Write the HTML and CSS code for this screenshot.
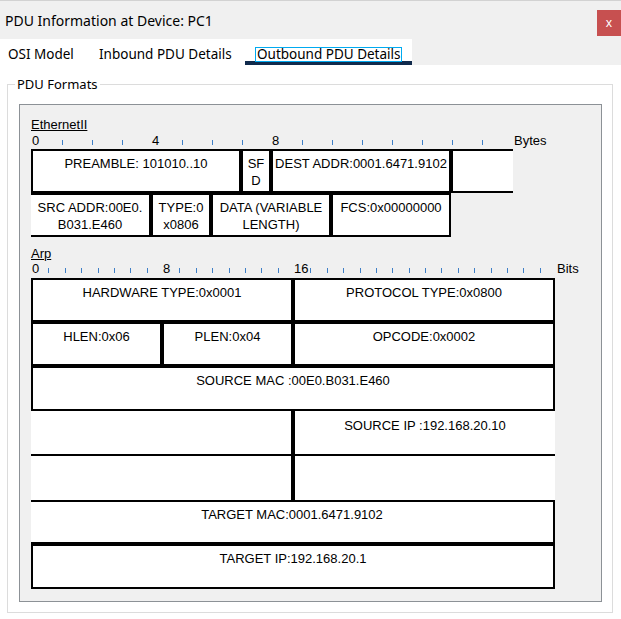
FILE: index.html
```html
<!DOCTYPE html>
<html>
<head>
<meta charset="utf-8">
<title>PDU Information at Device: PC1</title>
<link rel="stylesheet" href="styles.css">
</head>
<body>
<div class="window">
  <div class="titlebar">
    <span class="title">PDU Information at Device: PC1</span>
    <button class="close">x</button>
  </div>
  <div class="tabbar">
    <div class="tabs">
      <div class="tab tab-osi"><span class="tab-label">OSI Model</span></div>
      <div class="tab tab-in"><span class="tab-label">Inbound PDU Details</span></div>
      <div class="tab tab-out active"><span class="tab-label focus-ring">Outbound PDU Details</span></div>
    </div>
  </div>
  <div class="content">
    <fieldset class="group">
      <legend class="group-title">PDU Formats</legend>
      <div class="panel">
        <section class="pdu pdu-eth">
          <div class="pdu-name">EthernetII</div>
          <div class="ruler ruler-bytes">
            <span class="slot num">0</span>
            <span class="slot"><span class="tick"></span></span>
            <span class="slot"><span class="tick"></span></span>
            <span class="slot"><span class="tick"></span></span>
            <span class="slot num">4</span>
            <span class="slot"><span class="tick"></span></span>
            <span class="slot"><span class="tick"></span></span>
            <span class="slot"><span class="tick"></span></span>
            <span class="slot num">8</span>
            <span class="slot"><span class="tick"></span></span>
            <span class="slot"><span class="tick"></span></span>
            <span class="slot"><span class="tick"></span></span>
            <span class="slot"><span class="tick"></span></span>
            <span class="slot"><span class="tick"></span></span>
            <span class="slot"><span class="tick"></span></span>
            <span class="slot"><span class="tick"></span></span>
            <span class="unit">Bytes</span>
          </div>
          <div class="fields fields-eth">
            <div class="cell s7">PREAMBLE: 101010..10</div>
            <div class="cell s1">SF<br>D</div>
            <div class="cell s6">DEST ADDR:0001.6471.9102</div>
            <div class="cell s2 nr ext"></div>
            <div class="cell s4 nl">SRC ADDR:00E0.<br>B031.E460</div>
            <div class="cell s2">TYPE:0<br>x0806</div>
            <div class="cell s4">DATA (VARIABLE<br>LENGTH)</div>
            <div class="cell s4">FCS:0x00000000</div>
          </div>
        </section>
        <section class="pdu pdu-arp">
          <div class="pdu-name">Arp</div>
          <div class="ruler ruler-bits">
            <span class="slot num">0</span>
            <span class="slot"><span class="tick"></span></span>
            <span class="slot"><span class="tick"></span></span>
            <span class="slot"><span class="tick"></span></span>
            <span class="slot"><span class="tick"></span></span>
            <span class="slot"><span class="tick"></span></span>
            <span class="slot"><span class="tick"></span></span>
            <span class="slot"><span class="tick"></span></span>
            <span class="slot num">8</span>
            <span class="slot"><span class="tick"></span></span>
            <span class="slot"><span class="tick"></span></span>
            <span class="slot"><span class="tick"></span></span>
            <span class="slot"><span class="tick"></span></span>
            <span class="slot"><span class="tick"></span></span>
            <span class="slot"><span class="tick"></span></span>
            <span class="slot"><span class="tick"></span></span>
            <span class="slot num">16</span>
            <span class="slot"><span class="tick"></span></span>
            <span class="slot"><span class="tick"></span></span>
            <span class="slot"><span class="tick"></span></span>
            <span class="slot"><span class="tick"></span></span>
            <span class="slot"><span class="tick"></span></span>
            <span class="slot"><span class="tick"></span></span>
            <span class="slot"><span class="tick"></span></span>
            <span class="slot"><span class="tick"></span></span>
            <span class="slot"><span class="tick"></span></span>
            <span class="slot"><span class="tick"></span></span>
            <span class="slot"><span class="tick"></span></span>
            <span class="slot"><span class="tick"></span></span>
            <span class="slot"><span class="tick"></span></span>
            <span class="slot"><span class="tick"></span></span>
            <span class="slot"><span class="tick"></span></span>
            <span class="unit">Bits</span>
          </div>
          <div class="fields fields-arp">
            <div class="cell s16">HARDWARE TYPE:0x0001</div>
            <div class="cell s16">PROTOCOL TYPE:0x0800</div>
            <div class="cell s8">HLEN:0x06</div>
            <div class="cell s8">PLEN:0x04</div>
            <div class="cell s16">OPCODE:0x0002</div>
            <div class="cell s32">SOURCE MAC :00E0.B031.E460</div>
            <div class="cell s16 nl nt"></div>
            <div class="cell s16 nt nr">SOURCE IP :192.168.20.10</div>
            <div class="cell s16 nl nt nb"></div>
            <div class="cell s16 nt nr nb"></div>
            <div class="cell s32 nl">TARGET MAC:0001.6471.9102</div>
            <div class="cell s32">TARGET IP:192.168.20.1</div>
          </div>
        </section>
      </div>
    </fieldset>
  </div>
</div>
</body>
</html>
```
FILE: styles.css
```css
* { box-sizing: border-box; }
html, body { margin: 0; padding: 0; }
body {
  width: 621px;
  height: 619px;
  overflow: hidden;
  background: #ffffff;
  color: #000;
  font-family: "Noto Sans", "Open Sans", sans-serif;
}
.window {
  width: 621px;
  height: 619px;
  display: flex;
  flex-direction: column;
}

/* title bar */
.titlebar {
  height: 39px;
  flex: none;
  background: #f0f0f0;
  border-top: 1px solid #d2d2d2;
  display: flex;
  justify-content: space-between;
  align-items: flex-start;
}
.title {
  font-size: 14px;
  line-height: 20px;
  margin: 10px 0 0 5px;
  color: #000;
}
.close {
  margin-top: 9px;
  width: 24px;
  height: 26px;
  border: 0;
  padding: 0;
  background: #c75050;
  color: #fff;
  font-family: "Noto Sans", sans-serif;
  font-size: 12px;
  line-height: 24px;
}

/* tabs */
.tabbar {
  height: 26px;
  flex: none;
  background: #f0f0f0;
}
.tabs {
  width: 412px;
  height: 26px;
  background: #fff;
  display: flex;
}
.tab {
  height: 26px;
  padding-top: 6px;
  font-size: 13.5px;
  flex: none;
}
.tab-osi { width: 87px; padding-left: 7px; }
.tab-in { width: 158px; padding-left: 11px; }
.tab-out { width: 167px; padding-left: 11px; }
.tab-label {
  display: inline-block;
  line-height: 13px;
  padding: 0 1px;
  white-space: nowrap;
}
.tab.active { border-bottom: 4px solid #102a4c; }
.focus-ring { box-shadow: 0 0 0 1px rgb(0, 170, 240); }

/* group box */
.content { flex: 1; }
.group {
  margin: 11px 8px 0 7px;
  padding: 11px 10px 10px 11px;
  border: 1px solid #dcdcdc;
  min-width: 0;
}
.group-title {
  font-size: 13px;
  line-height: 17px;
  padding: 0 2px;
  margin-left: -4px;
}
.panel {
  width: 583px;
  height: 498px;
  border: 1px solid #8c9196;
  background: #f0f0f0;
  padding: 12px 0 0 11px;
  font-family: "Liberation Sans", Arial, sans-serif;
  font-size: 13px;
}

/* PDU sections */
.pdu-name {
  line-height: 15px;
  text-decoration: underline;
}
.pdu-arp { margin-top: 9px; }
.ruler {
  display: flex;
  align-items: flex-end;
  height: 13px;
  padding-left: 1px;
  margin-top: 2px;
}
.pdu-arp .ruler { margin-top: 1px; }
.slot {
  flex: none;
  height: 13px;
  display: flex;
  align-items: flex-end;
  line-height: 13px;
}
.ruler-bytes .slot { width: 30px; }
.ruler-bits .slot { width: 16.375px; }
.tick {
  width: 1px;
  height: 5px;
  margin-bottom: 2px;
  background: #3f7fc6;
}
.unit { line-height: 13px; }
.ruler-bytes .unit { margin-left: 2px; }
.ruler-bits .unit { margin-left: 1px; }

.fields { display: grid; margin-top: 2px; }
.fields-eth {
  grid-template-columns: repeat(16, 30px);
  grid-template-rows: 44px 44px;
}
.fields-arp {
  margin-top: 3px;
  grid-template-columns: repeat(32, 16.375px);
  grid-template-rows: 44px 44px 45px 45px 44px 44px 45px;
}
.cell {
  background: #fff;
  border: 2px solid #000;
  padding-top: 4px;
  text-align: center;
  line-height: 17px;
  white-space: nowrap;
}
.nl { border-left: 0; }
.nr { border-right: 0; }
.nt { border-top: 0; padding-top: 6px; }
.nb { border-bottom: 0; }
.ext { margin-right: -2px; }
.s1 { grid-column: span 1; }
.s2 { grid-column: span 2; }
.s4 { grid-column: span 4; }
.s6 { grid-column: span 6; }
.s7 { grid-column: span 7; }
.s8 { grid-column: span 8; }
.s16 { grid-column: span 16; }
.s32 { grid-column: span 32; }
```
